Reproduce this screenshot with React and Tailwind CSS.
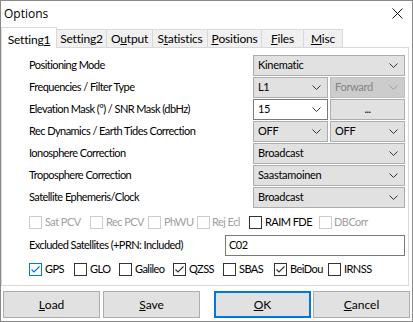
import React from 'react';

const font = { fontFamily: 'Lato, "Liberation Sans", Arial, sans-serif' };

const Chevron = ({ color = '#333' }) => (
  <svg width="9" height="5" viewBox="0 0 9 5" className="shrink-0">
    <path d="M0.5 0.5 L4.5 4.5 L8.5 0.5" fill="none" stroke={color} strokeWidth="1" />
  </svg>
);

const Combo = ({ value, className = '', disabled, white }) => (
  <div
    className={`flex h-[21px] items-center justify-between border pl-[4px] pr-[6px] tracking-[-0.3px] ${
      disabled
        ? 'border-[#bfbfbf] bg-[#cccccc] text-[#838383]'
        : white
        ? 'border-[#7a7a7a] bg-white text-black'
        : 'border-[#adadad] bg-[#e1e1e1] text-black'
    } ${className}`}
  >
    <span>{value}</span>
    <Chevron color={disabled ? '#a0a0a0' : '#333'} />
  </div>
);

const Row = ({ label, children }) => (
  <div className="flex h-[21px] items-center">
    <div className="w-[251px] pl-[27px]">{label}</div>
    <div className="flex w-[152px] gap-[2px]">{children}</div>
  </div>
);

const Check = ({ label, checked, disabled, focus, gap = 'ml-[3px]' }) => (
  <div className={`flex items-center ${disabled ? 'text-[#a0a0a0]' : 'text-black'}`}>
    <div
      className={`flex h-[13px] w-[13px] shrink-0 items-center justify-center border bg-white ${
        disabled ? 'border-[#cccccc]' : focus ? 'border-[#0078d7]' : 'border-[#333333]'
      }`}
    >
      {checked && (
        <svg width="9" height="7" viewBox="0 0 9 7">
          <path d="M0.5 3.5 L3 6 L8.5 0.5" fill="none" stroke={focus ? '#0078d7' : '#333'} strokeWidth="1.2" />
        </svg>
      )}
    </div>
    <span className={gap}>{label}</span>
  </div>
);

const Btn = ({ children, primary }) => (
  <div
    className={`flex h-[27px] w-[97px] items-center justify-center bg-[#e1e1e1] text-[12px] tracking-normal ${
      primary ? 'border-2 border-[#0078d7]' : 'border border-[#adadad]'
    }`}
  >
    {children}
  </div>
);

const tabs = [
  ['Settin', 'g', '2', 50],
  ['O', 'u', 'tput', 46],
  ['S', 't', 'atistics', 55],
  ['', 'P', 'ositions', 54],
  ['', 'F', 'iles', 42],
  ['', 'M', 'isc', 39],
];

export default function App() {
  return (
    <div
      className="flex h-[322px] w-[413px] flex-col whitespace-nowrap border border-[#8a8a8a] bg-white text-[11px] tracking-[-0.55px] text-black"
      style={font}
    >
      {/* title bar */}
      <div className="flex h-[25px] items-center justify-between pl-[3px] pr-[9px]">
        <span className="text-[12px] tracking-normal" style={{ fontFamily: '"Open Sans", "Noto Sans", sans-serif' }}>
          Options
        </span>
        <svg width="11" height="11" viewBox="0 0 11 11">
          <path d="M0.5 0.5 L10.5 10.5 M10.5 0.5 L0.5 10.5" stroke="#111" strokeWidth="1" />
        </svg>
      </div>

      {/* tabs */}
      <div className="relative z-10 flex h-[21px] items-end text-[12px] tracking-[-0.2px]">
        <div className="-mb-[1px] flex h-[21px] w-[56px] items-start justify-center border border-b-0 border-[#d9d9d9] bg-white pt-[3px]">
          Setting<span className="underline">1</span>
        </div>
        {tabs.map(([a, u, b, w]) => (
          <div
            key={a + u + b}
            className="flex h-[18px] items-center justify-center border border-l-0 border-b-0 border-[#d9d9d9] bg-[#f0f0f0]"
            style={{ width: w }}
          >
            {a}
            <span className="underline">{u}</span>
            {b}
          </div>
        ))}
      </div>

      {/* panel */}
      <div className="flex h-[239px] w-[408px] flex-col border border-[#d9d9d9] bg-white pt-[7px]">
        <div className="flex flex-col gap-[1px]">
          <Row label="Positioning Mode">
            <Combo value="Kinematic" className="w-[152px]" />
          </Row>
          <Row label="Frequencies / Filter Type">
            <Combo value="L1" className="w-[75px]" />
            <Combo value="Forward" className="w-[75px]" disabled />
          </Row>
          <Row label="Elevation Mask (°) / SNR Mask (dbHz)">
            <Combo value="15" className="w-[75px]" white />
            <div className="flex h-[21px] w-[75px] items-center justify-center border border-[#adadad] bg-[#e1e1e1]">...</div>
          </Row>
          <Row label="Rec Dynamics / Earth Tides Correction">
            <Combo value="OFF" className="w-[75px]" />
            <Combo value="OFF" className="w-[75px]" />
          </Row>
          <Row label="Ionosphere Correction">
            <Combo value="Broadcast" className="w-[152px]" />
          </Row>
          <Row label="Troposphere Correction">
            <Combo value="Saastamoinen" className="w-[152px]" />
          </Row>
          <Row label="Satellite Ephemeris/Clock">
            <Combo value="Broadcast" className="w-[152px]" />
          </Row>
        </div>

        <div className="mt-[4px] flex h-[21px] items-center pl-[27px]">
          <div className="w-[61px]"><Check label="Sat PCV" disabled /></div>
          <div className="w-[58px]"><Check label="Rec PCV" disabled /></div>
          <div className="w-[49px]"><Check label="PhWU" disabled /></div>
          <div className="w-[52px]"><Check label="Rej Ecl" disabled gap="ml-[2px]" /></div>
          <div className="w-[70px]"><Check label="RAIM FDE" /></div>
          <div><Check label="DBCorr" disabled gap="ml-[2px]" /></div>
        </div>

        <div className="mt-[2px] flex h-[21px] items-center">
          <div className="w-[223px] pl-[27px]">Excluded Satellites (+PRN: Included)</div>
          <div className="flex h-[21px] w-[180px] items-center border border-[#7a7a7a] bg-white pl-[3px]">C02</div>
        </div>

        <div className="mt-[3px] flex h-[21px] items-center pl-[27px]">
          <div className="w-[45px]"><Check label="GPS" checked focus /></div>
          <div className="w-[45px]"><Check label="GLO" /></div>
          <div className="w-[54px]"><Check label="Galileo" /></div>
          <div className="w-[50px]"><Check label="QZSS" checked /></div>
          <div className="w-[51px]"><Check label="SBAS" /></div>
          <div className="w-[54px]"><Check label="BeiDou" checked /></div>
          <div><Check label="IRNSS" /></div>
        </div>
      </div>

      {/* buttons */}
      <div className="mt-[5px] flex pl-[2px]">
        <Btn><span className="underline">L</span>oad</Btn>
        <div className="ml-[3px]"><Btn><span className="underline">S</span>ave</Btn></div>
        <div className="ml-[14px]"><Btn primary><span className="underline">O</span>K</Btn></div>
        <div className="ml-[2px]"><Btn><span className="underline">C</span>ancel</Btn></div>
      </div>
    </div>
  );
}
